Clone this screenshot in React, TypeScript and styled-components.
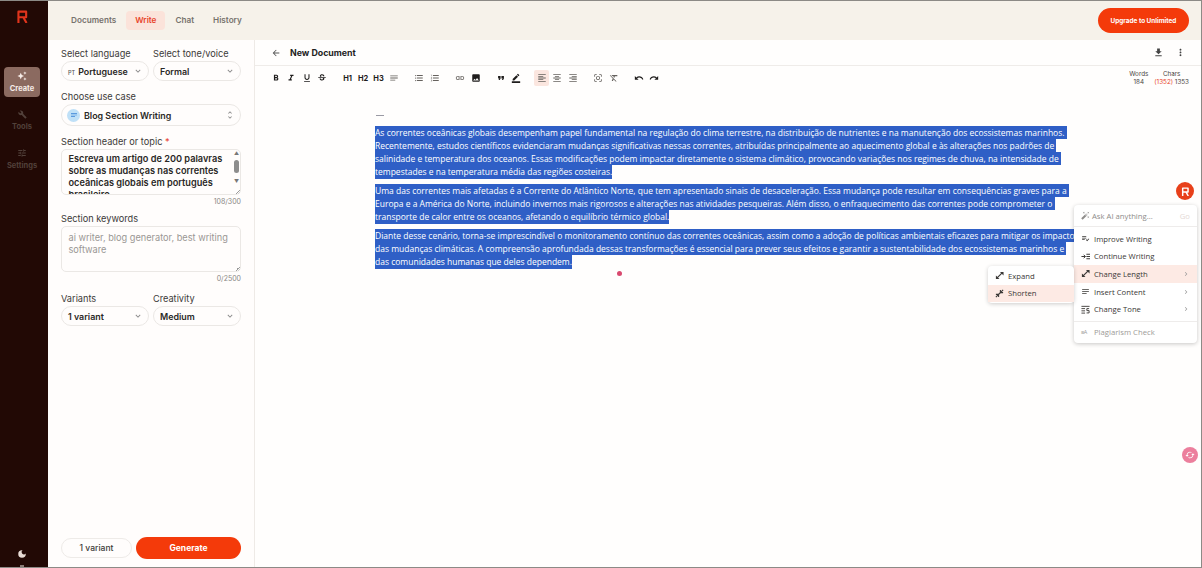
import styled, { createGlobalStyle } from 'styled-components'
import {
    MdArrowBack, MdAutoFixHigh, MdBorderColor, MdFileDownload, MdFormatAlignCenter, MdFormatAlignLeft,
    MdFormatAlignRight, MdFormatBold, MdFormatClear, MdFormatItalic, MdFormatListBulleted, MdFormatListNumbered,
    MdFormatQuote, MdStrikethroughS, MdFormatUnderlined, MdImage, MdKeyboardArrowDown, MdLink, MdMoreVert,
    MdNotes, MdPlaylistAddCheck, MdUnfoldMore, MdUndo, MdRedo, MdOutlineCenterFocusStrong, MdBuild,
    MdChevronRight, MdDarkMode, MdTune, MdAutoAwesome, MdCached,
} from 'react-icons/md'

const UI_FONT = `Inter, "Noto Sans", sans-serif`
const DOC_FONT = `"Open Sans", "Noto Sans", sans-serif`

const paragraphs = [
    [
        'As correntes oceânicas globais desempenham papel fundamental na regulação do clima terrestre, na distribuição de nutrientes e na manutenção dos ecossistemas marinhos. ',
        'Recentemente, estudos científicos evidenciaram mudanças significativas nessas correntes, atribuídas principalmente ao aquecimento global e às alterações nos padrões de ',
        'salinidade e temperatura dos oceanos. Essas modificações podem impactar diretamente o sistema climático, provocando variações nos regimes de chuva, na intensidade de ',
        'tempestades e na temperatura média das regiões costeiras.',
    ],
    [
        'Uma das correntes mais afetadas é a Corrente do Atlântico Norte, que tem apresentado sinais de desaceleração. Essa mudança pode resultar em consequências graves para a ',
        'Europa e a América do Norte, incluindo invernos mais rigorosos e alterações nas atividades pesqueiras. Além disso, o enfraquecimento das correntes pode comprometer o ',
        'transporte de calor entre os oceanos, afetando o equilíbrio térmico global.',
    ],
    [
        'Diante desse cenário, torna-se imprescindível o monitoramento contínuo das correntes oceânicas, assim como a adoção de políticas ambientais eficazes para mitigar os impactos ',
        'das mudanças climáticas. A compreensão aprofundada dessas transformações é essencial para prever seus efeitos e garantir a sustentabilidade dos ecossistemas marinhos e ',
        'das comunidades humanas que deles dependem.',
    ],
]

const Logo = ({ size = 14, color = '#e0341c' }: { size?: number; color?: string }) => (
    <svg width={size} height={size} viewBox="0 0 14 16" fill="none" stroke={color} strokeWidth="2.6" strokeLinejoin="round">
        <path d="M2 16V2h9.5v7H2M8 9l4 7" />
    </svg>
)

const LengthIcon = () => (
    <svg width="9" height="9" viewBox="0 0 10 10" fill="none" stroke="currentColor" strokeWidth="1.3">
        <path d="M1.5 8.5l7-7" />
        <path d="M5.5 1h4v4M1 5v4h4" fill="currentColor" stroke="none" />
    </svg>
)

const ShortenIcon = () => (
    <svg width="9" height="9" viewBox="0 0 10 10" fill="none" stroke="currentColor" strokeWidth="1.2">
        <path d="M1 9l8-8" />
        <path d="M6 1v3h3M1 6h3v3" />
    </svg>
)

const ContinueIcon = () => (
    <svg width="9" height="9" viewBox="0 0 10 10" fill="none" stroke="currentColor" strokeWidth="1.1">
        <path d="M0.5 5h4M3 3.2L5 5 3 6.8M6 2.5h4M6 5h4M6 7.5h4" />
    </svg>
)

const ToneIcon = () => (
    <svg width="9" height="9" viewBox="0 0 10 10" fill="none" stroke="currentColor" strokeWidth="1">
        <path d="M0.5 1.5h9M0.5 4h4M0.5 6.5h4M0.5 9h4M9 4H6.5v2.2H9v2.6H6.2" />
    </svg>
)

const App = () => {
    return (
        <Page>
            <GlobalStyle />
            <Rail>
                <RailLogo><Logo size={13} /></RailLogo>
                <RailItem $active>
                    <MdAutoAwesome size={10} />
                    <span>Create</span>
                </RailItem>
                <RailItem>
                    <MdBuild size={9} />
                    <span>Tools</span>
                </RailItem>
                <RailItem>
                    <MdTune size={10} />
                    <span>Settings</span>
                </RailItem>
                <RailBottom>
                    <MdDarkMode size={10} />
                    <RailStub />
                </RailBottom>
            </Rail>
            <Content>
                <TopBar>
                    <Tabs>
                        <Tab>Documents</Tab>
                        <Tab $active>Write</Tab>
                        <Tab>Chat</Tab>
                        <Tab>History</Tab>
                    </Tabs>
                    <UpgradeButton>Upgrade to Unlimited</UpgradeButton>
                </TopBar>
                <Body>
                    <Panel>
                        <FieldRow>
                            <Field>
                                <Label>Select language</Label>
                                <Select>
                                    <span><Flag>PT</Flag>Portuguese</span>
                                    <MdKeyboardArrowDown size={10} />
                                </Select>
                            </Field>
                            <Field>
                                <Label>Select tone/voice</Label>
                                <Select>
                                    <span>Formal</span>
                                    <MdKeyboardArrowDown size={10} />
                                </Select>
                            </Field>
                        </FieldRow>
                        <Field>
                            <Label>Choose use case</Label>
                            <UseCase>
                                <UseCaseIcon><MdNotes size={8} /></UseCaseIcon>
                                <span>Blog Section Writing</span>
                                <MdUnfoldMore size={10} />
                            </UseCase>
                        </Field>
                        <Field>
                            <Label>Section header or topic <Required>*</Required></Label>
                            <TextBox>
                                Escreva um artigo de 200 palavras sobre as mudanças nas correntes oceânicas globais em português brasileiro
                                <ScrollTrack>
                                    <span>▲</span>
                                    <ScrollThumb />
                                    <span>▼</span>
                                </ScrollTrack>
                            </TextBox>
                            <Counter $after={-5}>108/300</Counter>
                        </Field>
                        <Field>
                            <Label>Section keywords</Label>
                            <TextBox $placeholder>ai writer, blog generator, best writing software</TextBox>
                            <Counter $after={-2}>0/2500</Counter>
                        </Field>
                        <FieldRow>
                            <Field>
                                <Label>Variants</Label>
                                <Select>
                                    <span>1 variant</span>
                                    <MdKeyboardArrowDown size={10} />
                                </Select>
                            </Field>
                            <Field>
                                <Label>Creativity</Label>
                                <Select>
                                    <span>Medium</span>
                                    <MdKeyboardArrowDown size={10} />
                                </Select>
                            </Field>
                        </FieldRow>
                        <PanelFooter>
                            <VariantButton>1 variant</VariantButton>
                            <GenerateButton>Generate</GenerateButton>
                        </PanelFooter>
                    </Panel>
                    <Main>
                        <DocHeader>
                            <DocTitle>
                                <MdArrowBack size={10} color="#555" />
                                <span>New Document</span>
                            </DocTitle>
                            <DocActions>
                                <MdFileDownload size={11} />
                                <MdMoreVert size={11} />
                            </DocActions>
                        </DocHeader>
                        <Toolbar>
                            <ToolGroups>
                                <ToolGroup>
                                    <Tool><MdFormatBold /></Tool>
                                    <Tool><MdFormatItalic /></Tool>
                                    <Tool><MdFormatUnderlined /></Tool>
                                    <Tool><MdStrikethroughS /></Tool>
                                </ToolGroup>
                                <ToolGroup>
                                    <Tool>H1</Tool>
                                    <Tool>H2</Tool>
                                    <Tool>H3</Tool>
                                    <Tool $muted><MdNotes /></Tool>
                                </ToolGroup>
                                <ToolGroup>
                                    <Tool $muted><MdFormatListBulleted /></Tool>
                                    <Tool $muted><MdFormatListNumbered /></Tool>
                                </ToolGroup>
                                <ToolGroup>
                                    <Tool $muted><MdLink /></Tool>
                                    <Tool><MdImage /></Tool>
                                </ToolGroup>
                                <ToolGroup>
                                    <Tool><MdFormatQuote /></Tool>
                                    <Tool><MdBorderColor /></Tool>
                                </ToolGroup>
                                <ToolGroup>
                                    <Tool $muted $active><MdFormatAlignLeft /></Tool>
                                    <Tool $muted><MdFormatAlignCenter /></Tool>
                                    <Tool $muted><MdFormatAlignRight /></Tool>
                                </ToolGroup>
                                <ToolGroup>
                                    <Tool $muted><MdOutlineCenterFocusStrong /></Tool>
                                    <Tool $muted><MdFormatClear /></Tool>
                                </ToolGroup>
                                <ToolGroup>
                                    <Tool><MdUndo /></Tool>
                                    <Tool><MdRedo /></Tool>
                                </ToolGroup>
                            </ToolGroups>
                            <Stats>
                                <Stat>Words<br />184</Stat>
                                <Stat>Chars<br /><Over>(1352)</Over> 1353</Stat>
                            </Stats>
                        </Toolbar>
                        <Editor>
                            <Dash />
                            {paragraphs.map((lines, i) => (
                                <Paragraph key={i}>
                                    {lines.map((line, j) => <Line key={j}>{line}</Line>)}
                                </Paragraph>
                            ))}
                            <Dot />
                            <FloatLogo><Logo size={9} color="#fff" /></FloatLogo>
                            <AiMenu>
                                <AskRow>
                                    <MdAutoFixHigh size={9} />
                                    <span>Ask AI anything...</span>
                                    <GoLabel>Go</GoLabel>
                                </AskRow>
                                <MenuGroup>
                                    <MenuItem><MdPlaylistAddCheck size={9} />Improve Writing</MenuItem>
                                    <MenuItem><ContinueIcon />Continue Writing</MenuItem>
                                    <MenuItem $active><LengthIcon />Change Length<Arrow><MdChevronRight size={8} /></Arrow></MenuItem>
                                    <MenuItem><MdNotes size={9} />Insert Content<Arrow><MdChevronRight size={8} /></Arrow></MenuItem>
                                    <MenuItem><ToneIcon />Change Tone<Arrow><MdChevronRight size={8} /></Arrow></MenuItem>
                                </MenuGroup>
                                <MenuItem $disabled><PlagiarismMark>≡A</PlagiarismMark>Plagiarism Check</MenuItem>
                            </AiMenu>
                            <SubMenu>
                                <MenuItem><LengthIcon />Expand</MenuItem>
                                <MenuItem $active><ShortenIcon />Shorten</MenuItem>
                            </SubMenu>
                            <PinkBadge><MdCached size={10} /></PinkBadge>
                        </Editor>
                    </Main>
                </Body>
            </Content>
        </Page>
    )
}

const GlobalStyle = createGlobalStyle`
    html, body {
        margin: 0;
        padding: 0;
        background: #fff;
        font-family: ${UI_FONT};
    }
`;
const Page = styled.div`
    display: flex;
    width: 1202px;
    height: 568px;
    box-sizing: border-box;
    border-top: 1px solid #8c8a86;
    border-bottom: 1px solid #8c8a86;
    border-right: 1px solid #8c8a86;
    overflow: hidden;
`;
const Rail = styled.nav`
    width: 48px;
    flex-shrink: 0;
    box-sizing: border-box;
    padding-right: 4px;
    background: #220905;
    display: flex;
    flex-direction: column;
    align-items: center;
`;
const RailLogo = styled.div`
    height: 66px;
    padding-top: 9px;
    box-sizing: border-box;
    display: flex;
    justify-content: center;
`;
const RailItem = styled.div<{ $active?: boolean }>`
    width: 36px;
    height: ${p => (p.$active ? '30px' : '23px')};
    margin-bottom: ${p => (p.$active ? '12px' : '16px')};
    border-radius: 4px;
    background: ${p => (p.$active ? '#8b6a60' : 'transparent')};
    color: ${p => (p.$active ? '#f6ece8' : '#51403a')};
    display: flex;
    flex-direction: column;
    align-items: center;
    justify-content: center;
    gap: 3px;
    font-size: 7.5px;
    line-height: 10px;
    font-weight: 700;
`;
const RailBottom = styled.div`
    margin-top: auto;
    height: 18px;
    display: flex;
    flex-direction: column;
    align-items: center;
    gap: 6px;
    color: #e8dcd6;
`;
const RailStub = styled.div`
    width: 4px;
    height: 2px;
    flex-shrink: 0;
    background: #8a7a74;
`;
const Content = styled.div`
    flex: 1;
    display: flex;
    flex-direction: column;
    min-width: 0;
`;
const TopBar = styled.header`
    height: 39px;
    flex-shrink: 0;
    background: #f6f2ea;
    display: flex;
    align-items: center;
    justify-content: space-between;
    padding: 0 12px 0 14px;
`;
const Tabs = styled.div`
    display: flex;
    align-items: center;
    gap: 1px;
`;
const Tab = styled.div<{ $active?: boolean }>`
    height: 19px;
    line-height: 19px;
    padding: 0 9px;
    border-radius: 4px;
    font-size: 8.2px;
    font-weight: 600;
    color: ${p => (p.$active ? '#e8432a' : '#77736d')};
    background: ${p => (p.$active ? '#fbe3da' : 'transparent')};
`;
const UpgradeButton = styled.button`
    width: 91px;
    height: 25px;
    padding: 0;
    border: none;
    border-radius: 13px;
    background: #f43a0a;
    color: #fff;
    font-family: inherit;
    font-size: 6.4px;
    font-weight: 700;
`;
const Body = styled.div`
    flex: 1;
    display: flex;
    min-height: 0;
`;
const Panel = styled.aside`
    width: 207px;
    flex-shrink: 0;
    box-sizing: border-box;
    padding: 7px 13px 8px;
    border-right: 1px solid #eeeae6;
    background: #fffdfc;
    display: flex;
    flex-direction: column;
    gap: 9px;
`;
const FieldRow = styled.div`
    display: grid;
    grid-template-columns: 88px 88px;
    gap: 4px;
`;
const Field = styled.div`
    display: flex;
    flex-direction: column;
    min-width: 0;
`;
const Label = styled.label`
    height: 13px;
    line-height: 13px;
    margin-bottom: 1px;
    font-size: 9.2px;
    color: #3c3a38;
    white-space: nowrap;
`;
const Required = styled.span`
    color: #e8321a;
`;
const Select = styled.div`
    height: 20px;
    box-sizing: border-box;
    border: 1px solid #ebe8e5;
    border-radius: 10px;
    padding: 0 5px 0 6px;
    display: flex;
    align-items: center;
    justify-content: space-between;
    font-size: 8.9px;
    font-weight: 600;
    color: #2a2826;
    svg { color: #888; }
`;
const Flag = styled.span`
    font-size: 5.5px;
    font-weight: 500;
    color: #555;
    margin-right: 3px;
`;
const UseCase = styled(Select)`
    height: 22px;
    border-radius: 11px;
    padding: 0 5px;
    span { flex: 1; margin-left: 4px; }
`;
const UseCaseIcon = styled.div`
    width: 13px;
    height: 13px;
    border-radius: 50%;
    background: #bfe0f7;
    display: flex;
    align-items: center;
    justify-content: center;
    svg { color: #3b82d6; }
`;
const TextBox = styled.div<{ $placeholder?: boolean }>`
    position: relative;
    height: 46px;
    box-sizing: border-box;
    padding: ${p => (p.$placeholder ? '5px' : '3px')} 10px 0 6.5px;
    border: 1px solid #ebe8e5;
    border-radius: 5px;
    overflow: hidden;
    font-size: 9.2px;
    line-height: 12px;
    font-weight: ${p => (p.$placeholder ? 400 : 600)};
    color: ${p => (p.$placeholder ? '#9a9794' : '#2a2826')};
    &::after {
        content: '';
        position: absolute;
        right: 0;
        bottom: 0;
        width: 5px;
        height: 5px;
        background: linear-gradient(135deg, transparent 50%, #999 50%, #999 62%, transparent 62%, transparent 78%, #999 78%);
    }
`;
const ScrollTrack = styled.div`
    position: absolute;
    top: 0;
    right: -1px;
    width: 9px;
    display: flex;
    flex-direction: column;
    align-items: center;
    font-size: 5px;
    line-height: 7px;
    font-weight: 400;
    color: #777;
`;
const ScrollThumb = styled.div`
    width: 5px;
    height: 13px;
    margin: 2.5px 0 5px;
    border-radius: 3px;
    background: #8d8d8d;
`;
const Counter = styled.div<{ $after?: number }>`
    height: 13px;
    line-height: 13px;
    margin-bottom: ${p => p.$after ?? 0}px;
    text-align: right;
    font-size: 7px;
    color: #8a8784;
`;
const PanelFooter = styled.div`
    margin-top: auto;
    display: grid;
    grid-template-columns: 71px 105px;
    gap: 4px;
    align-items: center;
`;
const VariantButton = styled.div`
    height: 20px;
    line-height: 18px;
    box-sizing: border-box;
    border: 1px solid #eeebe8;
    border-radius: 10px;
    text-align: center;
    font-size: 8.5px;
    font-weight: 500;
    color: #3c3a38;
`;
const GenerateButton = styled.button`
    height: 22px;
    padding: 0;
    border: none;
    border-radius: 11px;
    background: #f43a0a;
    color: #fff;
    font-family: inherit;
    font-size: 8.5px;
    font-weight: 700;
`;
const Main = styled.main`
    flex: 1;
    min-width: 0;
    display: flex;
    flex-direction: column;
    background: #fffefd;
`;
const DocHeader = styled.div`
    height: 26px;
    flex-shrink: 0;
    box-sizing: border-box;
    border-bottom: 1px solid #efece9;
    padding: 0 15px 0 16px;
    display: flex;
    align-items: center;
    justify-content: space-between;
`;
const DocTitle = styled.div`
    display: flex;
    align-items: center;
    gap: 9px;
    font-size: 8.8px;
    font-weight: 700;
    color: #222;
`;
const DocActions = styled.div`
    display: flex;
    gap: 11px;
    color: #444;
`;
const Toolbar = styled.div`
    flex-shrink: 0;
    height: 24px;
    padding: 0 12px 0 13px;
    display: flex;
    align-items: center;
    justify-content: space-between;
`;
const ToolGroups = styled.div`
    display: flex;
    align-items: center;
    gap: 9.8px;
`;
const ToolGroup = styled.div`
    display: flex;
    align-items: center;
`;
const Tool = styled.div<{ $muted?: boolean; $active?: boolean }>`
    width: 15.5px;
    height: 16px;
    display: flex;
    align-items: center;
    justify-content: center;
    border-radius: 2px;
    font-size: 7.5px;
    font-weight: 700;
    color: ${p => (p.$muted ? '#66625e' : '#1f1d1c')};
    background: ${p => (p.$active ? '#fbe6df' : 'transparent')};
    svg { width: 10px; height: 10px; }
`;
const Stats = styled.div`
    display: flex;
    gap: 6px;
    margin-top: -1px;
`;
const Stat = styled.div`
    text-align: center;
    font-size: 6.3px;
    line-height: 8px;
    color: #4a4744;
`;
const Over = styled.span`
    color: #e8432a;
`;
const Editor = styled.div`
    position: relative;
    flex: 1;
    padding: 25px 0 0 120px;
`;
const Dash = styled.div`
    width: 8px;
    height: 1px;
    margin: 0 0 10px 1px;
    background: #9a9aa4;
`;
const Paragraph = styled.p`
    margin: 0 0 5.6px;
    font-family: ${DOC_FONT};
    font-size: 8.5px;
    line-height: 13.15px;
    color: #fff;
`;
const Line = styled.span`
    display: block;
    width: fit-content;
    height: 13.15px;
    background: #2f5fc6;
    white-space: pre;
`;
const Dot = styled.div`
    position: absolute;
    top: 181px;
    left: 362px;
    width: 5px;
    height: 5px;
    border-radius: 50%;
    background: #d9496f;
`;
const FloatLogo = styled.div`
    position: absolute;
    top: 92px;
    left: 921px;
    width: 18px;
    height: 18px;
    border-radius: 50%;
    background: #e8401a;
    display: flex;
    align-items: center;
    justify-content: center;
`;
const AiMenu = styled.div`
    position: absolute;
    top: 115px;
    left: 819px;
    width: 123px;
    height: 138px;
    box-sizing: border-box;
    border-radius: 4px;
    background: #fff;
    box-shadow: 0 1px 4px rgba(0, 0, 0, 0.22);
    font-family: ${DOC_FONT};
`;
const AskRow = styled.div`
    height: 21px;
    padding: 0 7px;
    display: flex;
    align-items: center;
    gap: 2px;
    font-size: 7.7px;
    color: #8e8c8a;
    span { flex: 1; }
`;
const GoLabel = styled.em`
    font-style: normal;
    color: #e4d9d5;
`;
const MenuGroup = styled.div`
    border-top: 1px solid #eeeceb;
    border-bottom: 1px solid #eeeceb;
    padding: 3px 0;
    margin-bottom: 1px;
`;
const MenuItem = styled.div<{ $active?: boolean; $disabled?: boolean }>`
    height: 17.6px;
    padding: 0 7px;
    display: flex;
    align-items: center;
    gap: 4px;
    font-size: 7.7px;
    color: ${p => (p.$disabled ? '#9c9a98' : '#3a3836')};
    background: ${p => (p.$active ? '#fdeae4' : 'transparent')};
    svg { flex-shrink: 0; }
`;
const PlagiarismMark = styled.span`
    width: 9px;
    font-size: 5.5px;
    letter-spacing: -0.4px;
    white-space: nowrap;
`;
const Arrow = styled.span`
    margin-left: auto;
    display: flex;
    color: #999;
`;
const SubMenu = styled.div`
    position: absolute;
    top: 176px;
    left: 733px;
    width: 86px;
    padding: 1px 0;
    border-radius: 4px;
    background: #fff;
    box-shadow: 0 1px 4px rgba(0, 0, 0, 0.2);
    font-family: ${DOC_FONT};
`;
const PinkBadge = styled.div`
    position: absolute;
    top: 357px;
    left: 927px;
    width: 16px;
    height: 16px;
    border-radius: 50%;
    background: #ec7f9d;
    color: #fff;
    display: flex;
    align-items: center;
    justify-content: center;
`;

export default App
